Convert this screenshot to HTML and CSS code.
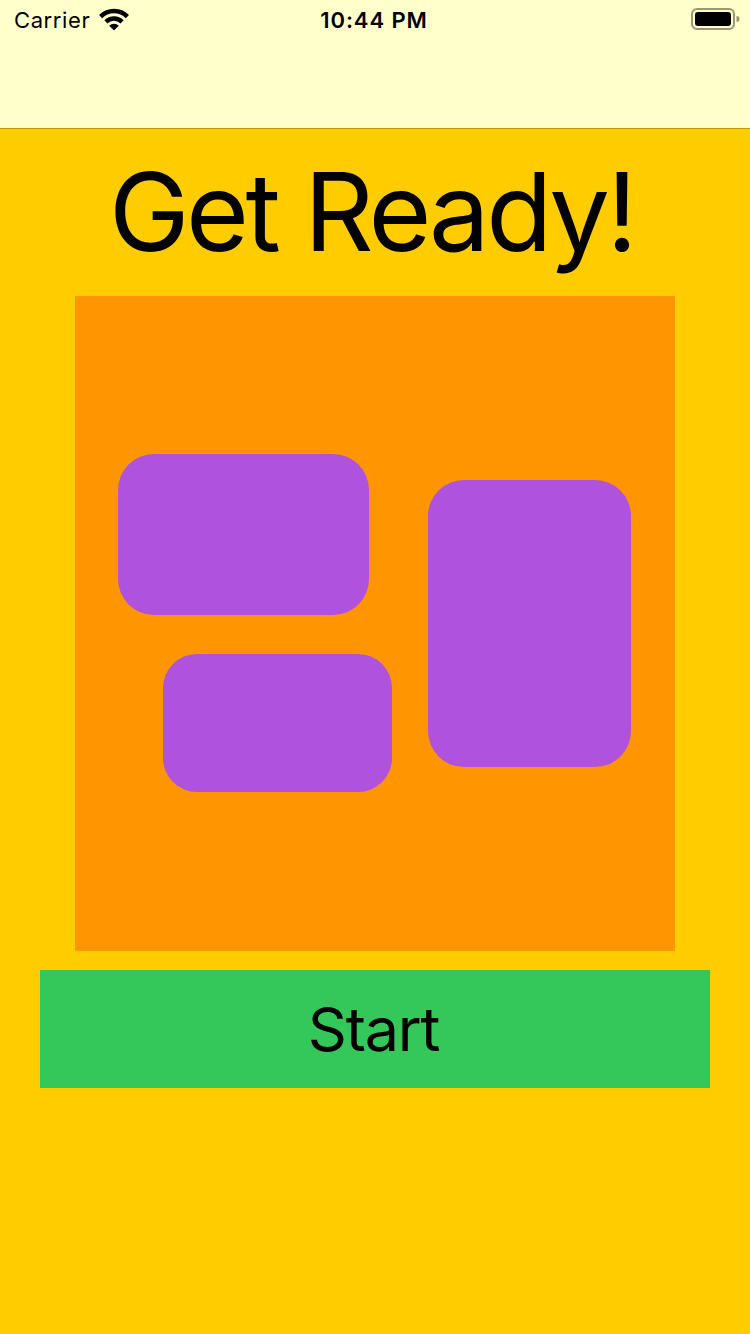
FILE: index.html
```html
<!DOCTYPE html>
<html>
<head>
<meta charset="utf-8">
<link rel="stylesheet" href="styles.css">
</head>
<body>
<div class="screen">
  <header class="top">
    <div class="status">
      <div class="status-left">
        <span class="carrier">Carrier</span>
        <svg class="wifi" width="30" height="23" viewBox="0 0 30 23">
          <path d="M1.6 8.6 A19 19 0 0 1 28.4 8.6" fill="none" stroke="#000" stroke-width="4.4"/>
          <path d="M6.9 13.9 A11.5 11.5 0 0 1 23.1 13.9" fill="none" stroke="#000" stroke-width="4.4"/>
          <path d="M15 22.5 L10.2 17.7 A6.8 6.8 0 0 1 19.8 17.7 Z" fill="#000"/>
        </svg>
      </div>
      <div class="time">10:44 PM</div>
      <div class="status-right">
        <svg class="battery" width="50" height="24" viewBox="0 0 50 24">
          <rect x="1" y="2" width="42" height="20" rx="5" ry="5" fill="none" stroke="#9b9771" stroke-width="2"/>
          <rect x="4" y="5" width="36" height="14" rx="3" ry="3" fill="#000"/>
          <path d="M45.5 9 A3 3 0 0 1 45.5 15 Z" fill="#9b9771"/>
        </svg>
      </div>
    </div>
    <div class="navbar"></div>
  </header>
  <main class="content">
    <h1 class="title">Get Ready!</h1>
    <div class="board">
      <div class="tile tile-a"></div>
      <div class="tile tile-b"></div>
      <div class="tile tile-c"></div>
    </div>
    <button class="start">Start</button>
  </main>
</div>
</body>
</html>
```

FILE: styles.css
```css
html, body {
  margin: 0;
  padding: 0;
}
body {
  width: 750px;
  height: 1334px;
  background: #ffcc00;
  font-family: Inter, "Liberation Sans", Arial, sans-serif;
  overflow: hidden;
}
.screen {
  width: 750px;
  height: 1334px;
  display: flex;
  flex-direction: column;
}
.top {
  background: #ffffcc;
  border-bottom: 1px solid #b89c00;
  height: 128px;
  display: flex;
  flex-direction: column;
}
.status {
  height: 40px;
  display: flex;
  align-items: center;
  justify-content: space-between;
  padding: 0 12px 0 14px;
}
.status-left {
  display: flex;
  align-items: center;
  gap: 9px;
  width: 200px;
}
.carrier {
  font-size: 22px;
  letter-spacing: 0.6px;
  color: #000;
}
.wifi {
  display: block;
  margin-top: -2px;
}
.time {
  font-size: 22px;
  font-weight: 600;
  letter-spacing: 0.9px;
  color: #000;
  margin-left: -4px;
}
.status-right {
  width: 200px;
  display: flex;
  justify-content: flex-end;
}
.battery {
  display: block;
  margin-right: -3px;
  margin-top: -2px;
}
.navbar {
  flex: 1;
}
.content {
  display: flex;
  flex-direction: column;
  align-items: center;
}
.title {
  margin: 19px 7px 0 0;
  font-weight: normal;
  font-size: 108px;
  line-height: 128px;
  letter-spacing: -3.5px;
  color: #000;
  height: 128px;
}
.board {
  margin-top: 20px;
  width: 600px;
  height: 655px;
  background: #ff9500;
  position: relative;
}
.tile {
  position: absolute;
  background: #af52de;
  border-radius: 36px;
}
.tile-a {
  left: 43px;
  top: 158px;
  width: 251px;
  height: 161px;
}
.tile-b {
  left: 88px;
  top: 358px;
  width: 229px;
  height: 138px;
  border-radius: 34px;
}
.tile-c {
  left: 353px;
  top: 184px;
  width: 203px;
  height: 287px;
}
.start {
  margin-top: 19px;
  width: 670px;
  height: 118px;
  background: #34c85a;
  border: none;
  border-radius: 0;
  font-family: Inter, "Liberation Sans", Arial, sans-serif;
  font-size: 61px;
  letter-spacing: -1.2px;
  color: #000;
  padding: 0 3px 0 0;
  display: flex;
  align-items: center;
  justify-content: center;
}
```
